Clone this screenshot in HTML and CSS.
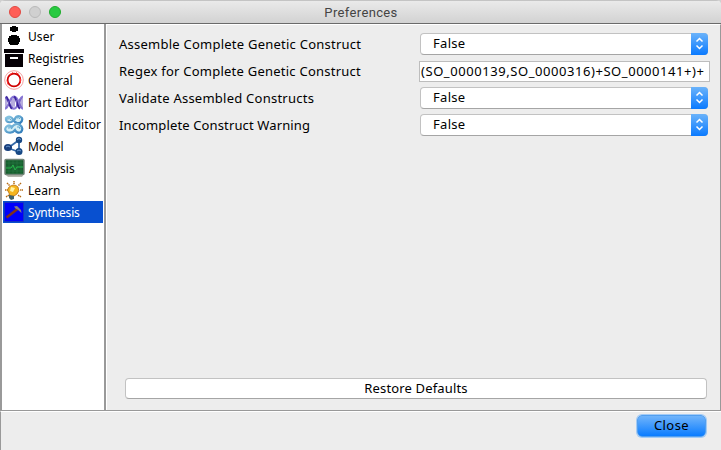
FILE: index.html
```html
<!DOCTYPE html>
<html lang="en">
<head>
<meta charset="utf-8">
<title>Preferences</title>
<link rel="stylesheet" href="styles.css">
</head>
<body>
<div class="window">
  <header class="titlebar">
    <div class="lights"><i class="light red"></i><i class="light gray"></i><i class="light green"></i></div>
    <h1>Preferences</h1>
  </header>
  <main class="content">
    <nav class="sidebar">
      <div class="item"><svg viewBox="0 0 20 22"><path d="M8 1h4v1h2v4h-2v1H8V6H6V2h2zM7 10h6v1h2v2h1v4h-1v2h-1v1H6v-1H5v-2H4v-4h1v-2h2z" fill="#000"/></svg><span>User</span></div>
      <div class="item"><svg viewBox="0 0 20 22"><path d="M0 2h20v4H0zM1 7h18v13H1z" fill="#050005"/><path d="M6 10h8v2H6z" fill="#fff"/></svg><span>Registries</span></div>
      <div class="item"><svg viewBox="0 0 20 22"><circle cx="10" cy="11" r="9.300" fill="#fff" stroke="#ef8888" stroke-width=".8"/><circle cx="10" cy="11" r="6.400" fill="none" stroke="#d00000" stroke-width="1.800"/><path d="M6 5.500l3-2M12 3.500l3 2M16.500 9.500v4M4 15.500l-1-4" stroke="#f33" stroke-width="1"/></svg><span>General</span></div>
      <div class="item"><svg viewBox="0 0 20 22"><g transform="translate(0 .7)"><path d="M1 6c4 0 4 11 9 11S15 5 19 5M1 17c4 0 4-12 9-12s5 12 9 12" fill="none" stroke="#8a78d6" stroke-width="2.200"/><path d="M2 5c3 2 3 10 6 12M10 5c3 2 3 10 6 12" fill="none" stroke="#3c259e" stroke-width="2"/><path d="M2 6v10M4.500 9v5M8 7v9M10 6v9M12.500 8v7M16 7v8M18 6v10" stroke="#6f5abd" stroke-width="1"/></g></svg><span>Part Editor</span></div>
      <div class="item"><svg viewBox="0 0 20 22"><defs><linearGradient id="cell" x2="1" y2="1"><stop stop-color="#8fcbe4"/><stop offset="1" stop-color="#2c78b8"/></linearGradient></defs><g fill="#d3eef5" stroke="url(#cell)" stroke-width="2.200"><path d="M2 5q3-3 6 0c2 3 2 4 5 5h3q3-2 2-5-3-3-6-1-2 4-5 5-4 1-5-2z"/><path d="M2 14q3-3 6 0c2-3 5-4 8-2q4 3 1 7-4 2-6-2-3 4-8 2-3-2-1-5z"/></g><path d="M3 6q3-1 4 1M13 5q2-1 3 1M4 15q3-1 4 1M13 14q3-1 3 2" fill="none" stroke="#5ba6d0" stroke-width="1"/></svg><span>Model Editor</span></div>
      <div class="item"><svg viewBox="0 0 20 22"><path d="M4 13l11-8M4 13l11 4M15 5v12" fill="none" stroke="#3569a8" stroke-width="1.800"/><ellipse cx="4" cy="12.500" rx="4" ry="3.500" fill="#183f7d"/><circle cx="15" cy="5" r="3.200" fill="#174884"/><circle cx="15" cy="16.500" r="3.500" fill="#174884"/><path d="M2 12q2-2 4 0M13 4.500q2-2 4 0M13 16q2-2 4 0" stroke="#6898d0" fill="none" stroke-width="1"/></svg><span>Model</span></div>
      <div class="item analysis"><svg viewBox="0 0 21 22"><g transform="translate(0 1)"><path d="M1 16h19l-2 3H4z" fill="#b5b5ad"/><rect x="1" y="1.500" width="19" height="15" rx="1" fill="#155f2d" stroke="#728478" stroke-width="1.500"/><path d="M2 5h17M2 9h17M2 13h17M5 2v14M9 2v14M13 2v14M17 2v14" stroke="#2b7b46" stroke-width=".6"/><path d="M2 10h5l2-3 2 5 2-3h6" fill="none" stroke="#25b449"/></g></svg><span>Analysis</span></div>
      <div class="item"><svg viewBox="0 0 20 22"><g transform="translate(0 1)"><path d="M10 1v3M3 3l3 3M1 10h3M2 17l3-2M17 3l-3 3M19 10h-3M17 17l-3-2" stroke="#b66c15" stroke-width="1.500" stroke-dasharray="1.500 .6"/><path d="M5 7q5-4 9 0 2 4-1 7l-3 2H6l-1-3q-3-3 0-6z" fill="#f5b51e" stroke="#b77013" stroke-width=".8"/><path d="M7 7l4 1-2 4-3-1z" fill="#fff3a2"/><path d="M5 15l5 1v3l-3 1-2-2z" fill="#3f626b"/></g></svg><span>Learn</span></div>
      <div class="item selected"><svg viewBox="0 0 20 22"><path d="M.5 1.500h19v19H.5z" fill="#0000fa" stroke="#1b36b5" stroke-width=".8"/><path d="M2.500 16.500L13.500 8" stroke="#803018" stroke-width="2.500"/><path d="M10 5.500l3-.5 4 4 .5 3-4-3.500-2-1z" fill="#858085"/></svg><span>Synthesis</span></div>
    </nav>
    <section class="panel">
      <div class="form">
        <label>Assemble Complete Genetic Construct</label>
        <div class="select"><span>False</span><b><svg viewBox="0 0 17 21"><path d="M5.500 8.500l3-3 3 3M5.500 12.500l3 3 3-3"/></svg></b></div>
        <label>Regex for Complete Genetic Construct</label>
        <div class="field"><span>(SO_0000139,SO_0000316)+SO_0000141+)+</span></div>
        <label>Validate Assembled Constructs</label>
        <div class="select"><span>False</span><b><svg viewBox="0 0 17 21"><path d="M5.500 8.500l3-3 3 3M5.500 12.500l3 3 3-3"/></svg></b></div>
        <label class="warning">Incomplete Construct Warning</label>
        <div class="select"><span>False</span><b><svg viewBox="0 0 17 21"><path d="M5.500 8.500l3-3 3 3M5.500 12.500l3 3 3-3"/></svg></b></div>
      </div>
      <button class="restore">Restore Defaults</button>
    </section>
  </main>
  <footer class="footer"><button class="close">Close</button></footer>
</div>
</body>
</html>
```

FILE: styles.css
```css
* { box-sizing: border-box; }
body { margin: 0; background: #d0d0d0; font: 13px/20px "Noto Sans", "Open Sans", sans-serif; color: #000; }
.window { width: 721px; height: 450px; overflow: hidden; display: flex; flex-direction: column; background: #ededed; border-radius: 5px 5px 0 0; }
.titlebar { height: 24px; flex: none; display: grid; grid-template-columns: 80px 1fr 80px; background: linear-gradient(#eaeaea, #d2d2d2); border-top: 1px solid #c4c4c4; border-bottom: 1px solid #6a6a6a; }
.lights { display: flex; gap: 8px; padding: 5px 0 0 9px; }
.light { width: 12px; height: 12px; border-radius: 50%; border: 1px solid; }
.red { background: #ff5e57; border-color: #e14942; }
.gray { background: #d0d0d0; border-color: #b9b9b9; }
.green { background: #28ca41; border-color: #1eac2c; }
h1 { margin: 0; padding: 1px 0 0 1px; text-align: center; font: 13px/22px Roboto, sans-serif; letter-spacing: .35px; color: #444; }
.content { height: 387px; flex: none; display: flex; border-bottom: 1px solid #999; border-left: 1px solid #999; }
.sidebar { width: 105px; flex: none; background: #fff; border-left: 1px solid #999; border-right: 2px solid #999; padding: 1px 1px 0; }
.item { height: 22px; display: flex; gap: 4px; padding-left: 1px; font-size: 12px; line-height: 24px; letter-spacing: .07px; white-space: nowrap; }
.item svg { width: 20px; height: 22px; flex: none; }
.item.analysis svg { width: 21px; }
.selected { background: #0850d0; color: #fff; }
.selected span { letter-spacing: -.18px; }
.analysis span { letter-spacing: 0; }
.panel { flex: 1; display: flex; flex-direction: column; justify-content: space-between; border: 1px solid #fff; border-right: 1px solid #999; border-bottom: 0; padding: 6px 9px 11px 12px; }
.form { display: grid; grid-template-columns: 300px 291px; grid-auto-rows: 27px; }
.form label { padding-top: 3px; white-space: nowrap; letter-spacing: .24px; }
.form .warning { letter-spacing: .13px; }
.select { width: 288px; height: 22px; margin: 2px 0 0 1px; display: flex; justify-content: space-between; background: #fff; border: 1px solid #c2c2c2; border-bottom-color: #a5a5a5; border-radius: 4px; padding-left: 12px; line-height: 19px; letter-spacing: .3px; }
.select b { width: 17px; height: 22px; margin: -1px -1px 0 0; border-radius: 0 4px 4px 0; background: linear-gradient(#6bb3fa, #0a7aff); }
.select svg { display: block; width: 17px; height: 21px; fill: none; stroke: #fff; stroke-width: 1.5; }
.field { height: 21px; margin-top: 3px; background: #fff; border: 1px solid #bdbdbd; padding-left: 1px; line-height: 19px; white-space: nowrap; overflow: hidden; letter-spacing: .56px; }
button { font: inherit; color: #000; padding: 0; }
.restore { width: 582px; height: 21px; margin-left: 6px; background: #fff; border: 1px solid #c2c2c2; border-bottom-color: #a5a5a5; border-radius: 4px; line-height: 19px; letter-spacing: .15px; }
.footer { flex: 1; display: flex; justify-content: flex-end; align-items: flex-start; padding: 3px 15px 0 0; border-top: 1px solid #fff; border-left: 1px solid #999; }
.close { width: 69px; height: 22px; background: linear-gradient(#70b4fb, #0a7cff); border: 1px solid #529fef; border-radius: 5px; box-shadow: 0 0 0 1px #a3cbf6; line-height: 18px; padding-bottom: 2px; letter-spacing: .4px; }
```
